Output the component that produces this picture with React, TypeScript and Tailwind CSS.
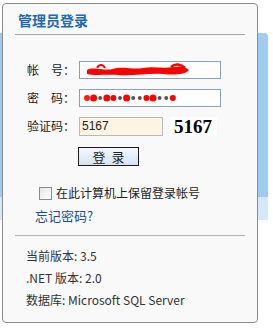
const labelFont = { fontFamily: '"Noto Sans CJK SC", "Liberation Sans", sans-serif' };

const Scribble = () => (
  <svg width="110" height="14" viewBox="0 0 110 14" className="ml-[3px]">
    <path
      d="M4 7 C10 3 20 8 30 6 C40 3 50 7 60 5 C70 3 80 6 90 4 C96 3 102 3 106 7 C102 12 90 12 80 11 C66 10 50 13 36 12 C22 11 12 13 4 11 Z"
      fill="#ff0000"
    />
    <path d="M14 5 C16 1 20 1 22 5" stroke="#ff0000" strokeWidth="2" fill="none" />
    <path d="M88 4 C92 0 98 1 102 5" stroke="#ff0000" strokeWidth="2.5" fill="none" />
  </svg>
);

const Dots = () => {
  const dots = [
    { r: 3, c: "#ff1a1a" },
    { r: 3.5, c: "#ff0000" },
    { r: 2, c: "#555" },
    { r: 3.5, c: "#ff0000" },
    { r: 3, c: "#ff0000" },
    { r: 2, c: "#555" },
    { r: 3.5, c: "#ff0000" },
    { r: 2, c: "#555" },
    { r: 2, c: "#555" },
    { r: 3, c: "#ff0000" },
    { r: 3.5, c: "#ff0000" },
    { r: 2, c: "#555" },
    { r: 2, c: "#555" },
    { r: 3, c: "#ff0000" },
  ];
  return (
    <svg width="96" height="10" viewBox="0 0 96 10" className="ml-[3px]">
      {dots.map((d, i) => (
        <circle key={i} cx={4 + i * 6.6} cy={5} r={d.r} fill={d.c} />
      ))}
    </svg>
  );
};

const Row = ({ label, children }: { label: React.ReactNode; children: React.ReactNode }) => (
  <div className="flex items-center h-[18px]">
    <span className="w-[52px] text-[12px] text-[#222] whitespace-pre" style={labelFont}>
      {label}
    </span>
    {children}
  </div>
);

export default function App() {
  return (
    <div className="relative w-[273px] h-[332px] bg-white overflow-hidden" style={labelFont}>
      <div className="absolute left-0 top-[33px] w-[268px] h-[164px] bg-[#9ecbf2] rounded-tr-[4px]" />
      <div className="absolute left-0 top-[197px] w-[268px] h-[23px] bg-[#d3e8fb]" />
      <div className="relative ml-[2px] mt-[3px] w-[256px] h-[320px] bg-[#f9f9f9] border border-[#8c8c8c] rounded-[4px] flex flex-col">
        <div className="pl-[15px] pt-[6px] h-[30px] text-[14px] font-bold text-[#1b6ab3]">管理员登录</div>
        <div className="mx-[12px] h-px bg-[#a6a6a6]" />
        <div className="flex flex-col pl-[24px] pt-[26px] gap-[10px]">
          <Row label={"帐　号："}>
            <div className="w-[142px] h-[18px] bg-white border border-[#8aa0b8] flex items-center">
              <Scribble />
            </div>
          </Row>
          <Row label={"密　码："}>
            <div className="w-[142px] h-[18px] bg-white border border-[#8aa0b8] flex items-center">
              <Dots />
            </div>
          </Row>
          <Row label="验证码：">
            <div className="w-[84px] h-[19px] bg-[#fdf4e3] border border-[#b8b8b8] flex items-center pl-[2px] text-[12px] text-[#222]" style={{ fontFamily: '"Liberation Sans", sans-serif' }}>
              5167
            </div>
            <div className="ml-[6px] w-[48px] h-[19px] bg-white flex items-center justify-center text-[19px] font-bold text-black leading-none" style={{ fontFamily: '"Liberation Serif", serif' }}>
              5167
            </div>
          </Row>
        </div>
        <div className="pl-[75px] pt-[12px]">
          <div className="w-[61px] h-[19px] border border-[#1a1a1a] bg-gradient-to-b from-[#f4f8fd] to-[#d3e3f5] flex items-center justify-center text-[13px] text-[#222] tracking-[6px] pl-[6px]">
            登录
          </div>
        </div>
        <div className="pl-[36px] pt-[18px] flex items-center h-[36px] text-[12px] text-[#222]">
          <span className="w-[13px] h-[13px] border border-[#8a8a8a] bg-gradient-to-br from-[#e6e6e6] to-[#fdfdfd] mr-[4px]" />
          在此计算机上保留登录帐号
        </div>
        <div className="pl-[32px] pt-[4px] h-[25px] text-[13px] text-[#1d4f8c]">忘记密码?</div>
        <div className="mx-[12px] mt-[8px] h-px bg-[#b0b0b0]" />
        <div className="flex flex-col pl-[23px] pt-[11px] gap-[4px] text-[12px] text-[#333] leading-[18px]">
          <div>当前版本: 3.5</div>
          <div>.NET 版本: 2.0</div>
          <div>数据库: Microsoft SQL Server</div>
        </div>
      </div>
    </div>
  );
}
